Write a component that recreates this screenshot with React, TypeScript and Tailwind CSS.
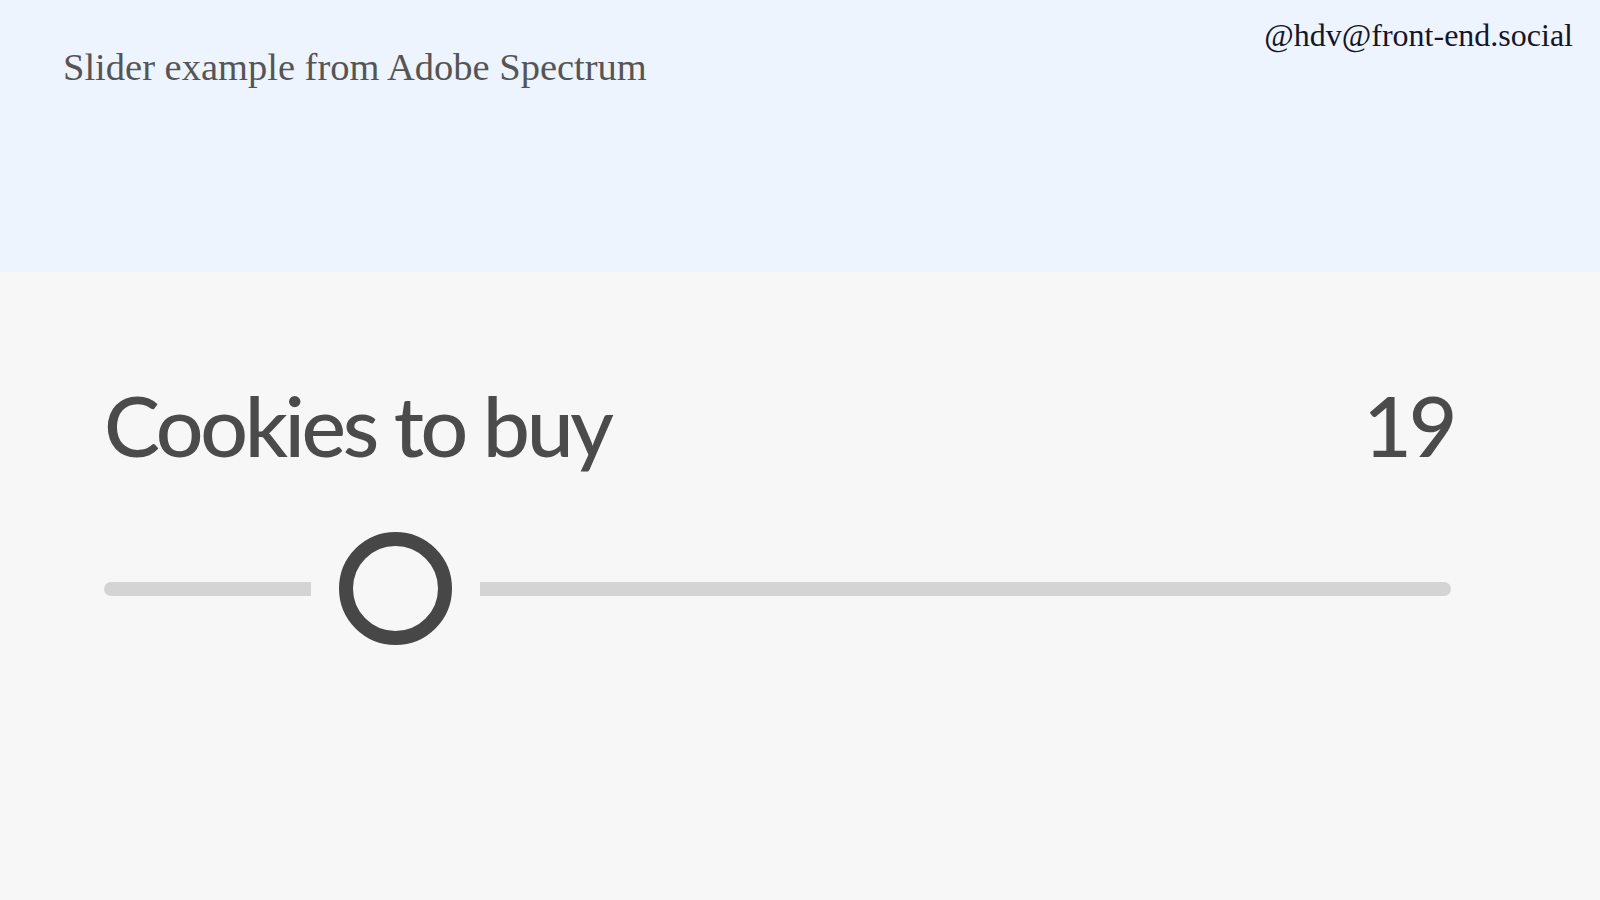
export default function App() {
  return (
    <div className="flex h-[900px] w-[1600px] flex-col overflow-hidden bg-[#f7f7f7]">
      <header className="flex h-[272px] shrink-0 items-start justify-between bg-[#edf4fd] pl-[63px] pr-[27px]">
        <h1
          className="pt-[43px] text-[38.5px] leading-[48px] text-[#555555]"
          style={{ fontFamily: '"Liberation Serif", serif' }}
        >
          Slider example from Adobe Spectrum
        </h1>
        <p
          className="pt-[13px] text-[32px] leading-[44px] text-[#151529]"
          style={{ fontFamily: '"Liberation Serif", serif' }}
        >
          @hdv@front-end.social
        </p>
      </header>

      <main className="flex w-[1451px] flex-col pl-[104px] pt-[103px]" style={{ fontFamily: "Lato, sans-serif" }}>
        <div className="flex items-baseline justify-between text-[84px] font-medium leading-[100px] tracking-[-0.04em] text-[#4b4b4b]">
          <span>Cookies to buy</span>
          <span className="-mr-[3px]">19</span>
        </div>

        <div className="mt-[57px] flex items-center">
          <div className="h-[14px] w-[207px] rounded-l-full bg-[#d4d4d4]" />
          <div className="mx-[28px] h-[113px] w-[113px] shrink-0 rounded-full border-[14px] border-[#474747]" />
          <div className="h-[14px] flex-1 rounded-r-full bg-[#d4d4d4]" />
        </div>
      </main>
    </div>
  );
}
